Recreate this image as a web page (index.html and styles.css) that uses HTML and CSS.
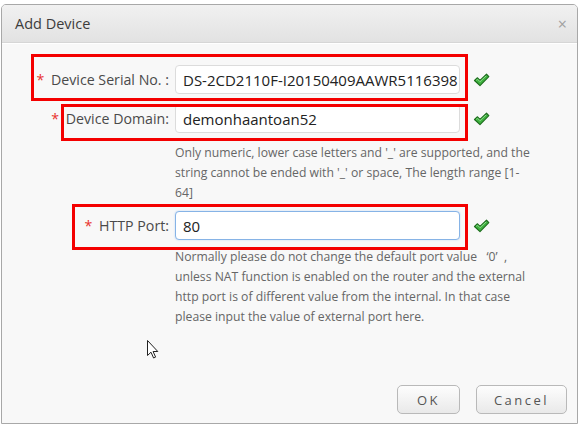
FILE: index.html
```html
<!DOCTYPE html>
<html>
<head>
<meta charset="utf-8">
<link rel="stylesheet" href="styles.css">
</head>
<body>
<div class="dialog">
  <div class="titlebar">
    <span class="title">Add Device</span>
    <span class="close">×</span>
  </div>
  <div class="body">
    <div class="form">
      <div class="row">
        <label class="label"><span class="req">*</span> Device Serial No. :</label>
        <div class="input">DS-2CD2110F-I20150409AAWR5116398</div>
        <svg class="check" width="17" height="14" viewBox="0 0 17 14"><path d="M1.5 7.5 L4.5 4.8 L7 7.4 L13.5 1.2 L15.8 3.6 L7 12.6 Z" fill="#3fb33f" stroke="#1d6e1d" stroke-width="1.2" stroke-linejoin="round"/><path d="M3.2 7.3 L4.5 6.2 L7 8.7 L13.4 2.6" fill="none" stroke="#8fe08f" stroke-width="1"/></svg>
      </div>
      <div class="row">
        <label class="label"><span class="req">*</span> Device Domain:</label>
        <div class="input">demonhaantoan52</div>
        <svg class="check" width="17" height="14" viewBox="0 0 17 14"><path d="M1.5 7.5 L4.5 4.8 L7 7.4 L13.5 1.2 L15.8 3.6 L7 12.6 Z" fill="#3fb33f" stroke="#1d6e1d" stroke-width="1.2" stroke-linejoin="round"/><path d="M3.2 7.3 L4.5 6.2 L7 8.7 L13.4 2.6" fill="none" stroke="#8fe08f" stroke-width="1"/></svg>
        <p class="hint hint-domain">Only numeric, lower case letters and '_' are supported, and the string cannot be ended with '_' or space, The length range [1-64]</p>
      </div>
      <div class="row row-port">
        <label class="label"><span class="req">*</span> HTTP Port:</label>
        <div class="input focus">80</div>
        <svg class="check" width="17" height="14" viewBox="0 0 17 14"><path d="M1.5 7.5 L4.5 4.8 L7 7.4 L13.5 1.2 L15.8 3.6 L7 12.6 Z" fill="#3fb33f" stroke="#1d6e1d" stroke-width="1.2" stroke-linejoin="round"/><path d="M3.2 7.3 L4.5 6.2 L7 8.7 L13.4 2.6" fill="none" stroke="#8fe08f" stroke-width="1"/></svg>
        <p class="hint">Normally please do not change the default port value &nbsp;&nbsp;‘0’ &nbsp;, unless NAT function is enabled on the router and the external http port is of different value from the internal. In that case please input the value of external port here.</p>
      </div>
    </div>
    <div class="footer">
      <button class="btn btn-ok">OK</button>
      <button class="btn btn-cancel">Cancel</button>
    </div>
    <div class="mark mark1"></div>
    <div class="mark mark2"></div>
    <div class="mark mark3"></div>
    <svg class="cursor" width="12" height="19" viewBox="0 0 12 19"><path d="M0.5 0.5 L0.5 15.5 L4 12.2 L6.6 18 L8.6 17.1 L6.1 11.5 L10.8 11.5 Z" fill="#fff" stroke="#222" stroke-width="1" stroke-linejoin="round"/></svg>
  </div>
</div>
</body>
</html>
```

FILE: styles.css
```css
html, body {
  margin: 0;
  padding: 0;
  background: #ffffff;
}
body {
  font-family: "Open Sans", "Noto Sans", sans-serif;
  color: #444;
}
.dialog {
  box-sizing: border-box;
  margin: 4px 0 0 1px;
  width: 577px;
  height: 420px;
  border: 1px solid #a8a8a8;
  border-radius: 5px 5px 0 0;
  background: #f8f8f8;
  display: flex;
  flex-direction: column;
  overflow: hidden;
}
.titlebar {
  height: 37px;
  flex: none;
  display: flex;
  align-items: center;
  justify-content: space-between;
  padding: 0 10px 0 13px;
  background: linear-gradient(#f1f1f1, #e2e2e2);
  border-bottom: 1px solid #d6d6d6;
  box-shadow: 0 1px 0 #ffffff;
}
.title {
  font-size: 14.5px;
  color: #3c3c3c;
}
.close {
  font-size: 16px;
  color: #a0a0a0;
  line-height: 1;
}
.body {
  flex: 1;
  position: relative;
  display: flex;
  flex-direction: column;
}
.form {
  flex: 1;
  padding-top: 22px;
  display: flex;
  flex-direction: column;
  gap: 10px;
}
.row {
  display: grid;
  grid-template-columns: 168px 285px auto;
  column-gap: 0;
  align-items: center;
}
.row-port {
  margin-top: -2px;
}
.label {
  text-align: right;
  padding-right: 1px;
  font-size: 14.2px;
  color: #4a4a4a;
  white-space: nowrap;
}
.req {
  color: #e8322d;
  margin-right: 3px;
}
.input {
  box-sizing: border-box;
  height: 29px;
  margin-left: 5px;
  width: 285px;
  border: 1px solid #dcdcdc;
  border-radius: 4px;
  background: #ffffff;
  padding: 0 7px;
  display: flex;
  align-items: center;
  font-size: 15px;
  color: #222;
  white-space: nowrap;
  overflow: hidden;
}
.input.focus {
  border-color: #86b3e6;
  box-shadow: 0 0 2px #b9d4f2;
}
.check {
  margin-left: 18px;
}
.hint {
  grid-column: 2 / 4;
  margin: 7px 0 0 5px;
  width: 362px;
  font-size: 12.2px;
  line-height: 20px;
  color: #666;
}
.hint-domain {
  margin-top: 10px;
}
.footer {
  flex: none;
  display: flex;
  justify-content: flex-end;
  gap: 16px;
  padding: 0 10px 9px 0;
}
.btn {
  box-sizing: border-box;
  height: 29px;
  border: 1px solid #b9b9b9;
  border-radius: 5px;
  background: linear-gradient(#fdfdfd, #e9e9e9);
  font-family: "Open Sans", sans-serif;
  font-size: 13px;
  letter-spacing: 2.5px;
  color: #555;
  padding: 0;
}
.btn-ok {
  width: 63px;
}
.btn-cancel {
  width: 91px;
}
.mark {
  position: absolute;
  box-sizing: border-box;
  border: 3px solid #f40000;
}
.mark1 {
  left: 29px;
  top: 11px;
  width: 437px;
  height: 47px;
}
.mark2 {
  left: 59px;
  top: 61px;
  width: 407px;
  height: 37px;
}
.mark3 {
  left: 70px;
  top: 161px;
  width: 396px;
  height: 46px;
}
.cursor {
  position: absolute;
  left: 145px;
  top: 297px;
}
```
